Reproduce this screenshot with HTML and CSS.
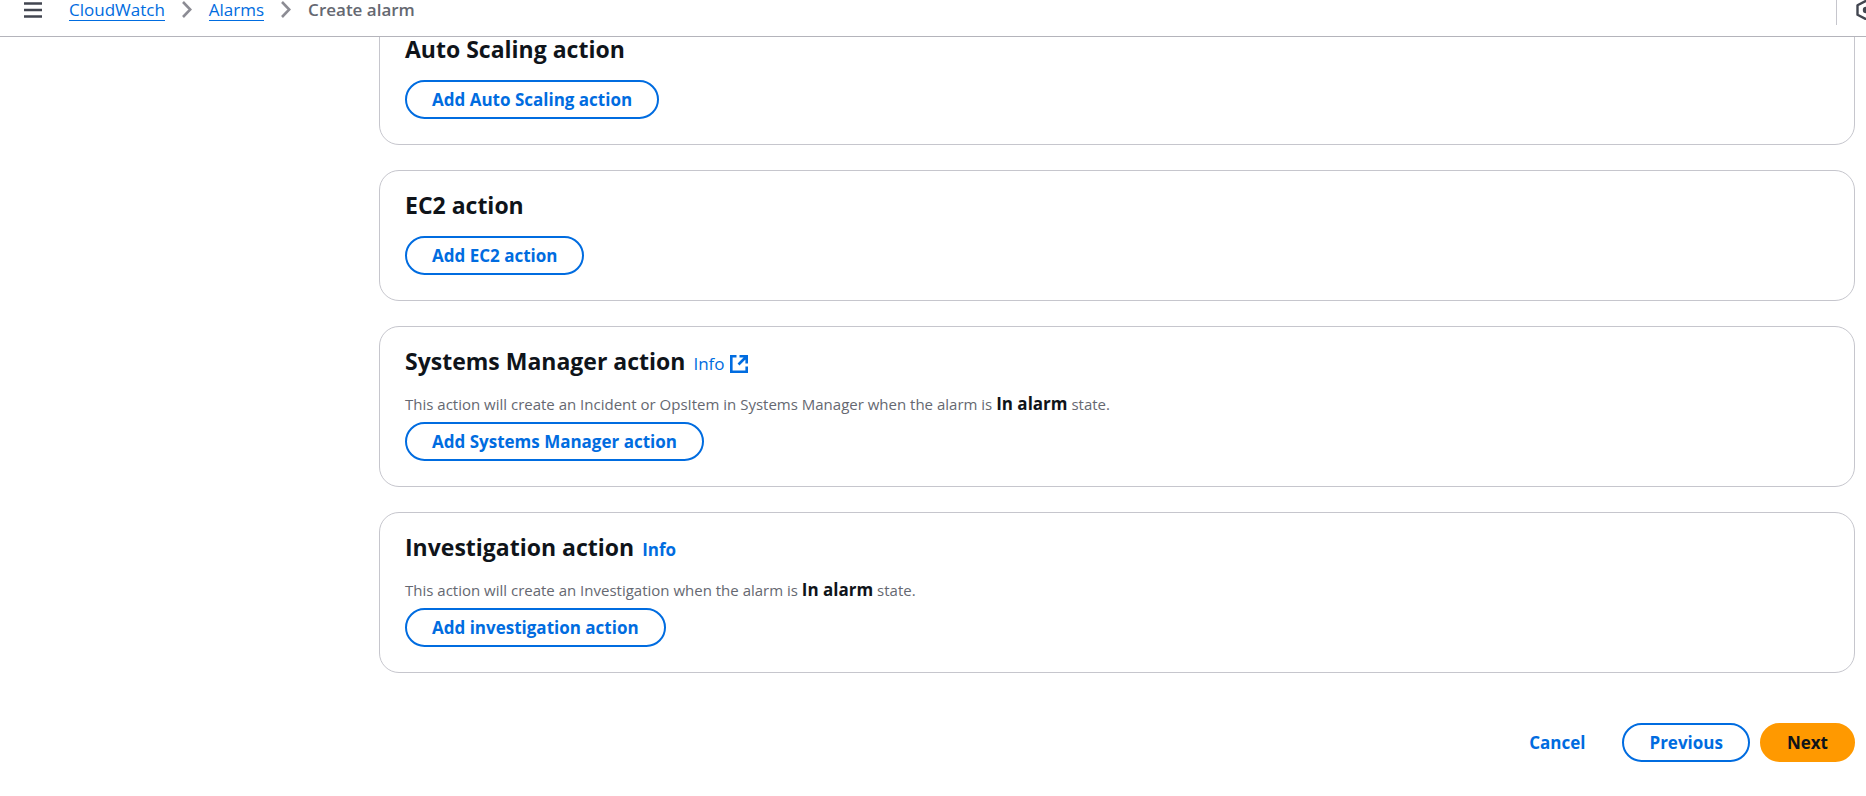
FILE: index.html
```html
<!DOCTYPE html>
<html lang="en">
<head>
<meta charset="utf-8">
<title>Create alarm</title>
<link rel="stylesheet" href="styles.css">
</head>
<body>
<header class="topbar">
  <button class="icon-button menu" type="button" aria-label="Open navigation">
    <svg width="18" height="16" viewBox="0 0 18 16"><path d="M0 1.5h18M0 8h18M0 14.5h18" stroke="#424650" stroke-width="2.4" fill="none"/></svg>
  </button>
  <nav class="crumbs" aria-label="Breadcrumbs">
    <a class="crumb" href="#cloudwatch">CloudWatch</a>
    <svg class="chevron" width="10" height="17" viewBox="0 0 10 17"><path d="M1 1l7.300 7.500L1 16" stroke="#8c8c94" stroke-width="2.600" fill="none"/></svg>
    <a class="crumb" href="#alarms">Alarms</a>
    <svg class="chevron" width="10" height="17" viewBox="0 0 10 17"><path d="M1 1l7.300 7.500L1 16" stroke="#8c8c94" stroke-width="2.600" fill="none"/></svg>
    <span class="current" aria-current="page">Create alarm</span>
  </nav>
  <div class="tools">
    <button class="icon-button" type="button" aria-label="Settings">
      <svg width="20" height="20" viewBox="0 0 20 20"><path d="M10 .8L18.500 5.200v9.600L10 19.200 1.500 14.800V5.200z" stroke="#424650" stroke-width="2.400" fill="none" stroke-linejoin="round"/><circle cx="10" cy="10" r="3.200" fill="#424650"/></svg>
    </button>
  </div>
</header>
<main class="content">
  <section class="card">
    <h2 class="title">Auto Scaling action</h2>
    <button class="button" type="button">Add Auto Scaling action</button>
  </section>
  <section class="card">
    <h2 class="title">EC2 action</h2>
    <button class="button" type="button">Add EC2 action</button>
  </section>
  <section class="card">
    <div class="heading">
      <h2 class="title">Systems Manager action</h2>
      <a class="info" href="#systems-manager">Info
        <svg class="external" width="18" height="18" viewBox="0 0 18 18"><path d="M6.500 1.300H1.300v15.400h15.400V11.500M9.500 1.300h7.200V8.500M16.500 1.500L8.500 9.500" stroke="#006ce0" stroke-width="2.600" fill="none"/></svg>
      </a>
    </div>
    <p class="note">This action will create an Incident or OpsItem in Systems Manager when the alarm is <strong class="state">In alarm</strong> state.</p>
    <button class="button" type="button">Add Systems Manager action</button>
  </section>
  <section class="card">
    <div class="heading">
      <h2 class="title">Investigation action</h2>
      <a class="info info-strong" href="#investigation">Info</a>
    </div>
    <p class="note">This action will create an Investigation when the alarm is <strong class="state">In alarm</strong> state.</p>
    <button class="button" type="button">Add investigation action</button>
  </section>
  <div class="actions">
    <button class="button button-link" type="button">Cancel</button>
    <button class="button" type="button">Previous</button>
    <button class="button button-primary" type="button">Next</button>
  </div>
</main>
</body>
</html>
```
FILE: styles.css
```css
* {
  box-sizing: border-box;
}

body {
  margin: 0;
  overflow: hidden;
  background: #fff;
  color: #0f141a;
  font-family: "Open Sans", "Noto Sans", sans-serif;
  font-size: 17px;
  line-height: 24px;
}

.topbar {
  position: sticky;
  top: 0;
  z-index: 1;
  display: flex;
  align-items: flex-start;
  height: 37px;
  padding-left: 24px;
  background: #fff;
  border-bottom: 1px solid #b4b4bb;
}

.icon-button {
  display: flex;
  flex: none;
  padding: 0;
  background: none;
  border: 0;
}

.menu {
  margin: 2px 27px 0 0;
}

.crumbs {
  display: flex;
  gap: 17px;
  line-height: 20px;
}

.crumb {
  color: #006ce0;
  text-decoration: none;
  border-bottom: 1px solid #006ce0;
}

.chevron {
  margin-top: 1px;
}

.current {
  color: #656871;
  font-weight: 600;
}

.tools {
  width: 30px;
  height: 25px;
  margin-left: auto;
  padding-left: 19px;
  overflow: hidden;
  border-left: 1px solid #c6c6cd;
}

.content {
  display: flex;
  flex-direction: column;
  gap: 25px;
  margin-top: -23px;
  padding: 0 11px 0 379px;
}

.card {
  display: flex;
  flex-direction: column;
  align-items: flex-start;
  padding: 20px 25px 25px;
  border: 1px solid #c6c6cd;
  border-radius: 20px;
}

.title {
  margin: 0 0 17px;
  font-size: 23px;
  font-weight: 700;
  line-height: 28px;
}

.heading {
  display: flex;
  align-items: baseline;
  gap: 8px;
}

.info {
  display: flex;
  align-items: center;
  gap: 5px;
  color: #006ce0;
  text-decoration: none;
}

.info-strong {
  font-weight: 700;
}

.note {
  margin: 0 0 6px;
  color: #656871;
  font-size: 15px;
  line-height: 24px;
}

.state {
  color: #0f141a;
  font-size: 17px;
  font-weight: 700;
}

.button {
  height: 39px;
  padding: 0 25px;
  background: #fff;
  border: 2px solid #006ce0;
  border-radius: 20px;
  color: #006ce0;
  font: inherit;
  font-weight: 700;
  line-height: 24px;
}

.button-link {
  border-color: transparent;
}

.button-primary {
  background: #ff9900;
  border-color: #ff9900;
  color: #0f141a;
}

.actions {
  display: flex;
  justify-content: flex-end;
  gap: 10px;
  margin-top: 25px;
}
```
